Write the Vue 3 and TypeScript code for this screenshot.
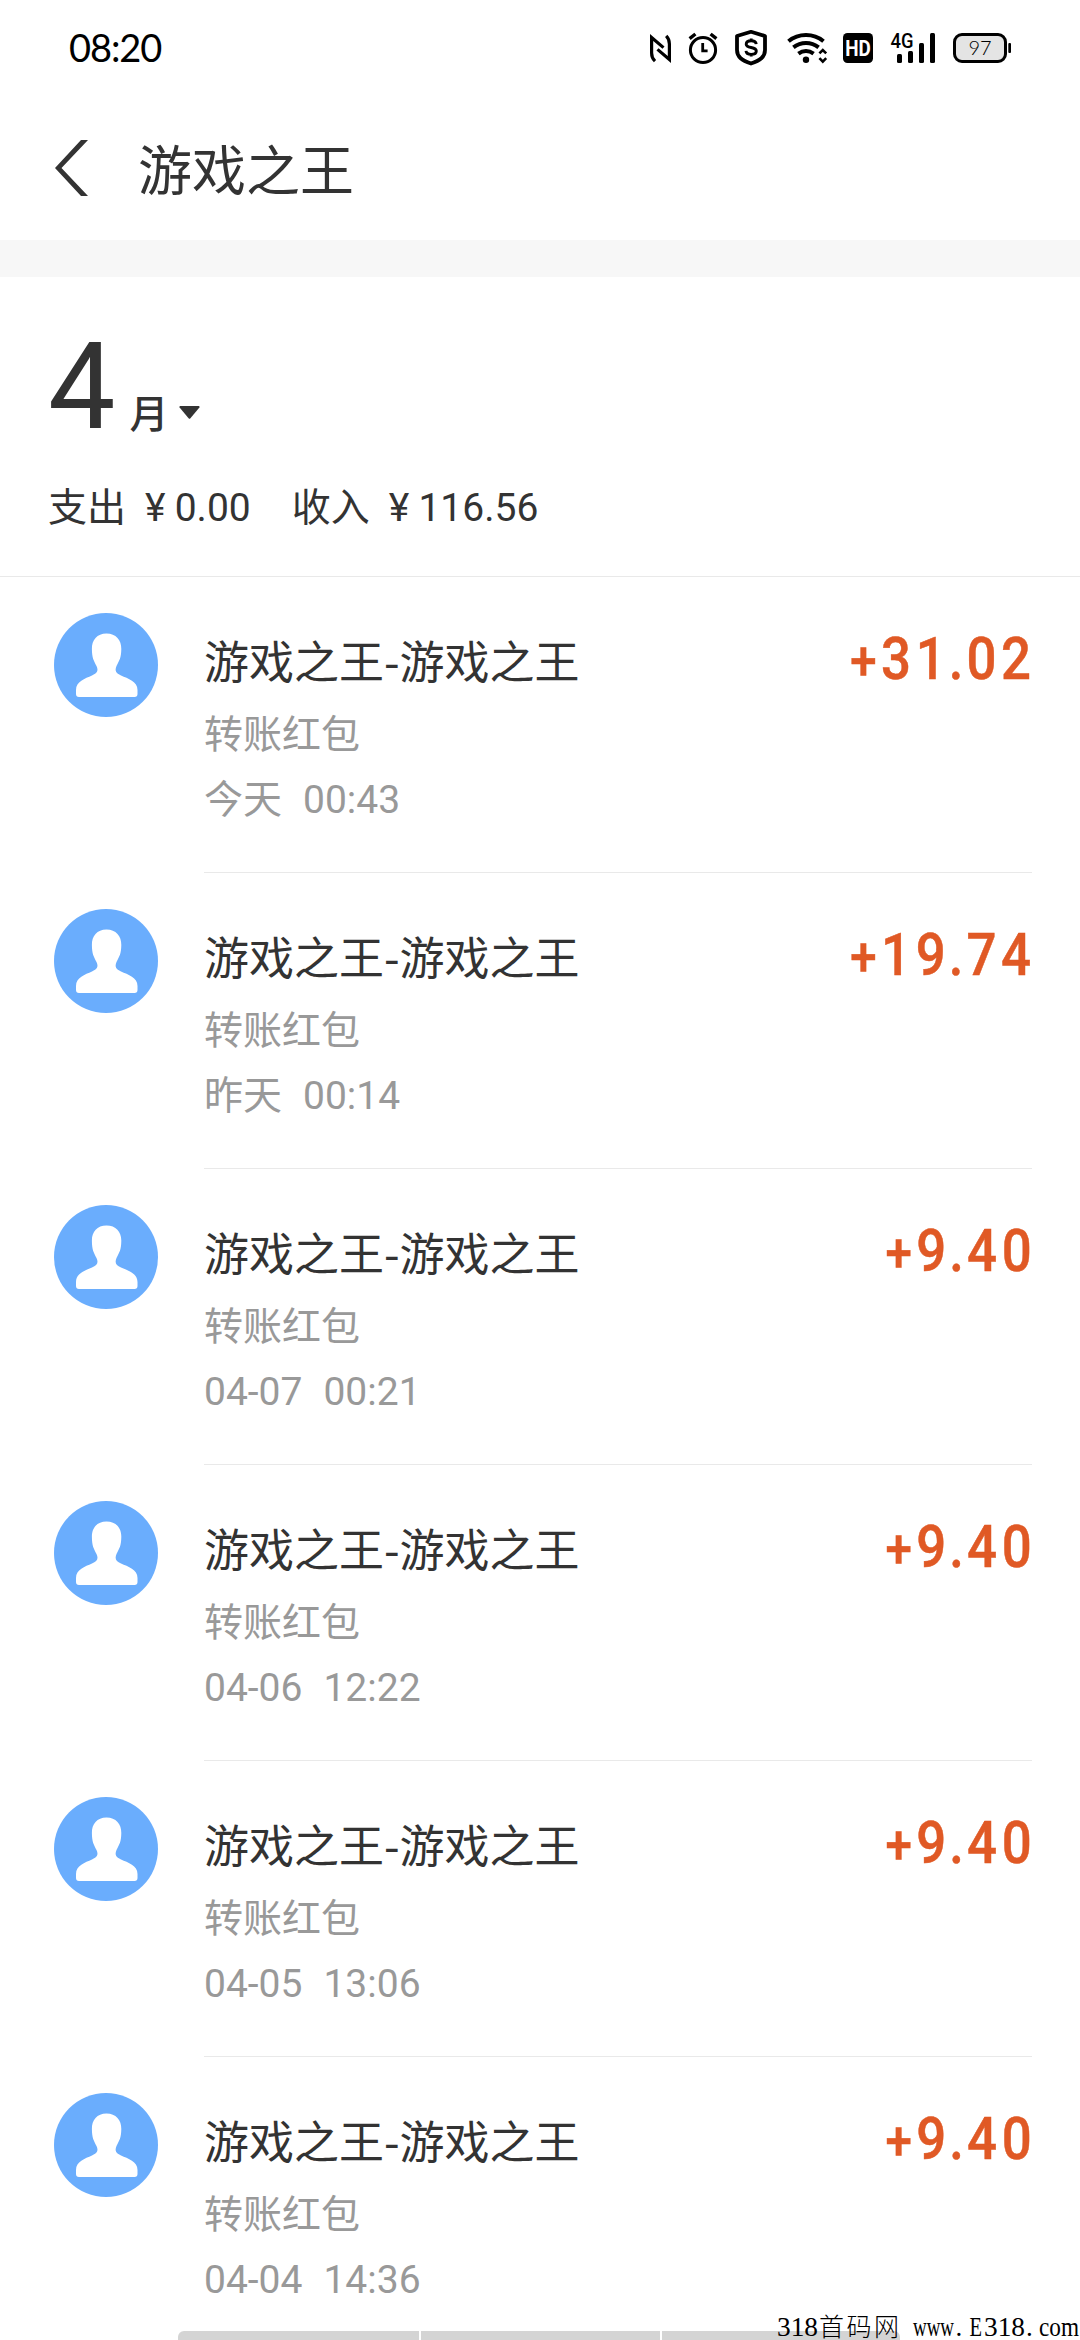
<script setup lang="ts">
interface Entry {
  date: string
  time: string
  whole: string
  cents: string
}

const title = '游戏之王'

const entries: Entry[] = [
  { date: '今天', time: '00:43', whole: '31', cents: '02' },
  { date: '昨天', time: '00:14', whole: '19', cents: '74' },
  { date: '04-07', time: '00:21', whole: '9', cents: '40' },
  { date: '04-06', time: '12:22', whole: '9', cents: '40' },
  { date: '04-05', time: '13:06', whole: '9', cents: '40' },
  { date: '04-04', time: '14:36', whole: '9', cents: '40' },
]
</script>

<template>
  <div class="screen">
    <div class="status">
      <span class="clock">08:20</span>
      <div class="status-icons">
        <!-- NFC -->
        <svg width="40" height="60" viewBox="640 20 40 60">
          <g fill="none" stroke="#000" stroke-width="3.2">
            <path d="M655 61.2Q651.6 58 651.6 53V37.5L663.5 47.6" />
            <path d="M666.2 35.8Q669.4 39 669.4 44V59.5L657.5 49.4" />
          </g>
        </svg>
        <!-- Alarm -->
        <svg width="46" height="60" viewBox="680 20 46 60">
          <g fill="none" stroke="#000">
            <circle cx="703" cy="50" r="12.6" stroke-width="3" />
            <path d="M702.7 43V50.8H707.6" stroke-width="2.8" />
            <path d="M689.6 38.6L695.4 34M710.6 34L716.4 38.6" stroke-width="3.4" />
          </g>
        </svg>
        <!-- Shield -->
        <svg width="51" height="60" viewBox="726 20 51 60">
          <path d="M751 31.8L765 36V50C765 57 760 60.5 751 63.5C742 60.5 737 57 737 50V36Z" fill="none" stroke="#000" stroke-width="3.8" stroke-linejoin="round" />
          <path d="M756.2 44.2C756 41.4 754 40.8 751.2 40.8C748.4 40.8 746.2 42 746.2 44.3C746.2 49 756.3 46 756.3 51C756.3 53.4 754 54.4 751.2 54.4C748.4 54.4 746.2 53.5 746 50.9M751.2 38.6V41M751.2 54V56.6" fill="none" stroke="#000" stroke-width="2.9" />
        </svg>
        <!-- Wi-Fi -->
        <svg width="57" height="60" viewBox="777 20 57 60">
          <g fill="none" stroke="#000" stroke-width="4">
            <path d="M788.5 41.2Q796 35 806 35Q816 35 823.5 41.2" />
            <path d="M793.4 47.4Q799 43 806 43Q813 43 818.6 47.4" />
            <path d="M798.4 53.6Q802 51 806 51Q810 51 813.6 53.6" />
          </g>
          <circle cx="806" cy="59.8" r="3.2" />
          <path d="M819.4 53.4L822.8 50L826.2 53.4M819.4 58.2L822.8 61.6L826.2 58.2" fill="none" stroke="#000" stroke-width="2.6" />
        </svg>
        <!-- HD voice -->
        <svg width="48" height="60" viewBox="834 20 48 60">
          <rect x="843" y="33" width="30" height="30" rx="4.5" />
          <text class="hd" x="845.2" y="56" textLength="25.6" lengthAdjust="spacingAndGlyphs">HD</text>
        </svg>
        <!-- Mobile signal -->
        <svg width="62" height="60" viewBox="882 20 62 60">
          <text class="net" x="890.5" y="48" textLength="23" lengthAdjust="spacingAndGlyphs">4G</text>
          <rect x="897" y="54" width="5" height="9" rx="1.5" />
          <rect x="908" y="51" width="5" height="12" rx="1.5" />
          <rect x="919" y="43" width="5" height="20" rx="1.5" />
          <rect x="930" y="33" width="5" height="30" rx="1.5" />
        </svg>
        <!-- Battery -->
        <svg width="76" height="60" viewBox="944 20 76 60">
          <rect x="954.5" y="34.5" width="51" height="27" rx="7.5" fill="#e4e4e4" stroke="#000" stroke-width="3" />
          <rect x="1008.3" y="43" width="2.7" height="10" rx="1" />
          <text class="level" x="980" y="55" text-anchor="middle">97</text>
        </svg>
      </div>
    </div>

    <header class="nav">
      <svg class="back" width="33" height="56" viewBox="0 0 33 56">
        <path d="M26 0H33L6.5 28L33 56H26L0 28Z" fill="#333" />
      </svg>
      <h1>{{ title }}</h1>
    </header>

    <section class="summary">
      <div class="month">
        <span class="num">4</span>
        <span class="unit">月</span>
        <svg class="caret" width="21" height="13" viewBox="0 0 21 13">
          <path d="M1 0H20Q21 .6 20.4 1.4L11.2 12.4Q10.5 13 9.8 12.4L.6 1.4Q0 .6 1 0Z" fill="#333" />
        </svg>
      </div>
      <div class="totals">
        <span class="total">支出 <i>¥</i>0.00</span>
        <span class="total">收入 <i>¥</i>116.56</span>
      </div>
    </section>

    <ul class="list">
      <li v-for="entry in entries" :key="entry.date" class="row">
        <svg class="avatar" width="104" height="104" viewBox="0 0 104 104">
          <circle cx="52" cy="52" r="52" fill="#6aadfd" />
          <path
            d="M52.5 20.5C62 20.5 67.5 27 67.3 36C67.2 45 65.5 47 62.5 53C60.5 58 62 60 67 62.5C74 65.5 83.5 68.5 83.5 77V81Q83.5 84 80.5 84H25Q22 84 22 81V77C22 68.5 31 65.5 38 62.5C43 60 44.8 58 42.5 53C39.5 47 38 45 37.9 36C37.7 27 43 20.5 52.5 20.5Z"
            fill="#fff"
          />
        </svg>
        <div class="body">
          <div class="main">
            <div class="name">{{ title }}-{{ title }}</div>
            <div class="kind">转账红包</div>
            <div class="when"><span>{{ entry.date }}</span><span>{{ entry.time }}</span></div>
          </div>
          <div class="amount"><span class="sign">+</span>{{ entry.whole }}<span class="point">.</span>{{ entry.cents }}</div>
        </div>
      </li>
    </ul>

    <div class="dock">
      <span class="tab"></span>
      <span class="tab"></span>
      <span class="tab"></span>
    </div>

    <svg class="mark" width="303" height="40" viewBox="0 0 303 40">
      <text x="0" y="36" textLength="41" lengthAdjust="spacingAndGlyphs">318</text>
      <text class="cn" x="42" y="36" textLength="80">首码网</text>
      <text x="136" y="36" textLength="41" lengthAdjust="spacingAndGlyphs">www</text>
      <text x="178.5" y="36">.</text>
      <text x="192.5" y="36" textLength="12.5" lengthAdjust="spacingAndGlyphs">E</text>
      <text x="207" y="36" textLength="41" lengthAdjust="spacingAndGlyphs">318</text>
      <text x="249" y="36">.</text>
      <text x="262" y="36" textLength="40" lengthAdjust="spacingAndGlyphs">com</text>
    </svg>
  </div>
</template>

<style>
body {
  margin: 0;
  background: #fff;
}
</style>

<style scoped>
.screen {
  position: relative;
  width: 1080px;
  height: 2340px;
  overflow: hidden;
  background: #fff;
  color: #333;
  font-family: Roboto, "Noto Sans CJK SC", sans-serif;
}
.status {
  display: flex;
  justify-content: space-between;
  height: 96px;
  padding: 0 60px 0 69px;
  color: #000;
}
.clock {
  font: 38px/94px Lato, sans-serif;
  letter-spacing: -1.1px;
}
.status-icons {
  display: flex;
  padding-top: 20px;
}
.hd {
  font: 700 22px Roboto, sans-serif;
  fill: #fff;
}
.net {
  font: 500 20px Roboto, sans-serif;
}
.level {
  font: 300 20px Lato, sans-serif;
}
.nav {
  display: flex;
  align-items: center;
  box-sizing: border-box;
  height: 144px;
  padding-left: 55px;
}
.nav h1 {
  margin: 10px 0 0 50px;
  font-size: 54px;
  line-height: 80px;
  font-weight: 400;
}
.summary {
  box-sizing: border-box;
  height: 337px;
  padding: 50px 48px 0;
  border-top: 37px solid #f7f7f7;
  border-bottom: 1px solid #e9e9e9;
}
.month {
  display: flex;
  align-items: baseline;
  height: 156px;
}
.num {
  font-size: 120px;
  line-height: 120px;
}
.unit {
  margin-left: 14px;
  font-size: 39px;
  font-weight: 500;
}
.caret {
  margin-left: 11px;
  position: relative;
  top: -9px;
}
.totals {
  display: flex;
  gap: 41px;
  font-size: 39px;
  line-height: 50px;
}
.total i {
  display: inline-block;
  width: 39px;
  text-align: center;
  font-style: normal;
}
.list {
  margin: 0;
  padding: 0;
  list-style: none;
}
.row {
  display: flex;
  height: 296px;
  padding: 0 48px 0 54px;
}
.avatar {
  flex: none;
  margin-top: 36px;
}
.body {
  flex: 1;
  display: flex;
  justify-content: space-between;
  box-sizing: border-box;
  margin-left: 46px;
  border-bottom: 1px solid #e9e9e9;
}
.name {
  margin-top: 52px;
  font-family: "Noto Sans CJK SC", sans-serif;
  font-size: 45px;
  line-height: 62px;
}
.kind {
  margin-top: 14px;
  font-size: 39px;
  line-height: 60px;
  color: #999;
}
.when {
  display: flex;
  gap: 21px;
  margin-top: 5px;
  font-size: 39px;
  line-height: 60px;
  color: #999;
}
.amount {
  margin: 47px -4px 0 0;
  font-size: 60px;
  line-height: 70px;
  font-weight: 500;
  letter-spacing: 5.3px;
  transform: scaleX(0.88);
  transform-origin: 100% 50%;
  color: #e05925;
  -webkit-text-stroke: 0.5px #e05925;
}
.sign {
  font-size: 54px;
  letter-spacing: 5px;
}
.point {
  margin-left: -2px;
  letter-spacing: 3.5px;
}
.dock {
  position: absolute;
  left: 178px;
  bottom: 0;
  display: flex;
  gap: 2px;
  width: 722px;
  height: 9px;
  overflow: hidden;
  border-radius: 6px 6px 0 0;
  background: #fff;
}
.tab {
  flex: 1;
  background: #d4d4d4;
}
.tab:first-child {
  flex: 0 0 241px;
}
.mark {
  position: absolute;
  left: 777px;
  bottom: 0;
  font: 27px "Liberation Serif", serif;
}
.cn {
  font: 300 25px "Noto Sans CJK SC", sans-serif;
}
</style>
